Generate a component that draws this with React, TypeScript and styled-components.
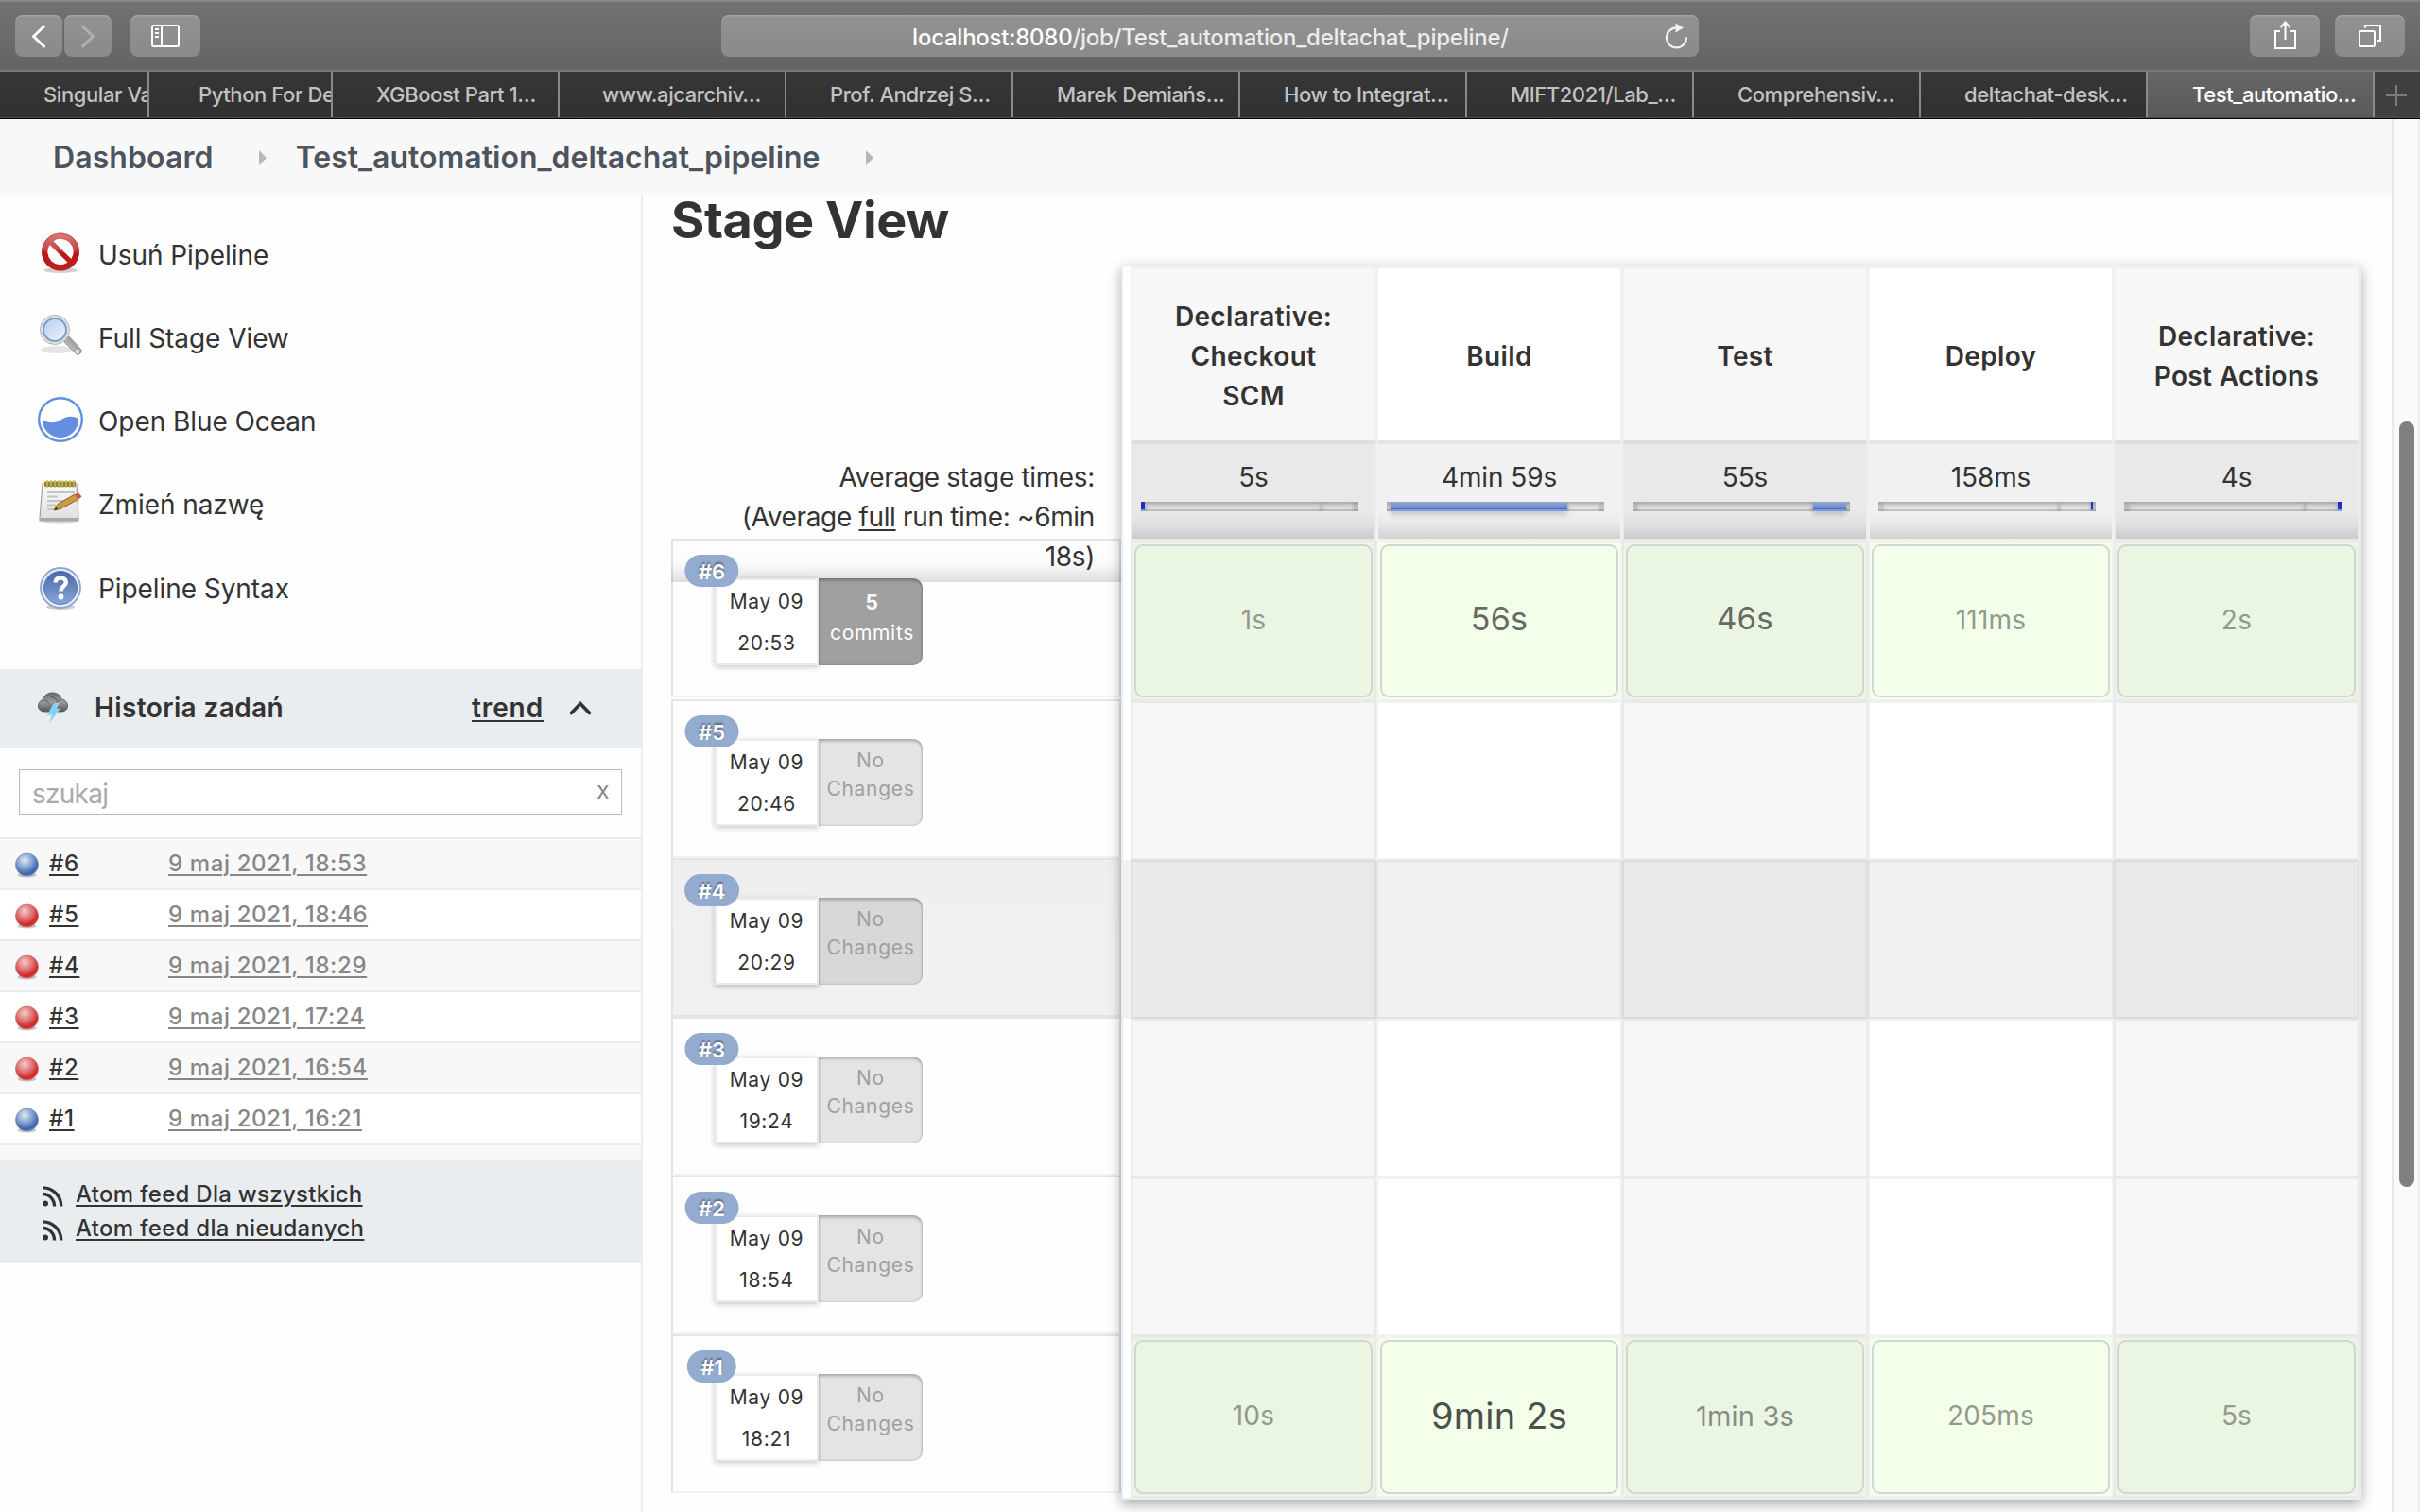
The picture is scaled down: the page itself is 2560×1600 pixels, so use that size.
import React from "react";
import styled, { createGlobalStyle, css } from "styled-components";

const GlobalStyle = createGlobalStyle`
  html, body { margin: 0; padding: 0; background: #fefefe; }
  body { width: 2560px; height: 1600px; overflow: hidden; }
  * { box-sizing: border-box; }
  a { color: inherit; }
  button { border: 0; padding: 0; font: inherit; }
  svg { display: block; flex: none; }
`;

const Window = styled.div`
  width: 2560px;
  height: 1600px;
  overflow: hidden;
  display: flex;
  flex-direction: column;
  background: #fefefe;
  color: #333;
  font-family: Inter, "Noto Sans", sans-serif;
  font-size: 28px;
`;

/* ---------- Browser chrome ---------- */

const Toolbar = styled.header`
  flex: none;
  height: 76px;
  display: grid;
  grid-template-columns: 747px 1034px 1fr;
  align-items: start;
  padding: 14px 16px 0;
  border-top: 2px solid #888;
  border-bottom: 2px solid #787878;
  background: linear-gradient(#727272, #646464);
`;

const ToolGroup = styled.div<{ $end?: boolean }>`
  display: flex;
  gap: ${(p) => (p.$end ? 16 : 2)}px;
  justify-content: ${(p) => (p.$end ? "flex-end" : "flex-start")};
`;

const ToolButton = styled.button<{ $wide?: boolean; $spaced?: boolean }>`
  width: ${(p) => (p.$wide ? 74 : 50)}px;
  height: 44px;
  margin-left: ${(p) => (p.$spaced ? 18 : 0)}px;
  border-radius: 8px;
  background: linear-gradient(#929292, #8a8a8a);
  box-shadow: inset 0 2px 0 -0.5px #a4a4a4;
`;

const AddressBar = styled.div`
  position: relative;
  height: 44px;
  padding: 2px 0 0 1px;
  border-radius: 8px;
  background: linear-gradient(#929292, #8a8a8a);
  box-shadow: inset 0 2px 0 -0.5px #a4a4a4;
  color: #ececec;
  font-size: 24px;
  font-weight: 500;
  line-height: 44px;
  letter-spacing: -0.25px;
  text-align: center;
  b { color: #fff; font-weight: 500; }
`;

const ReloadIcon = styled.svg`
  position: absolute;
  right: 8px;
  top: 5px;
`;

const TabStrip = styled.nav`
  flex: none;
  display: flex;
  height: 50px;
  border-bottom: 1px solid #000;
  box-shadow: inset 0 -1px 0 #4c4c4c;
  background: linear-gradient(#363636, #313131);
`;

const Tab = styled.div<{ $w: number; $pad: number; $active?: boolean }>`
  flex: none;
  width: ${(p) => p.$w}px;
  height: 48px;
  padding-left: ${(p) => p.$pad}px;
  border-right: 2px solid #8a8a8a;
  overflow: hidden;
  white-space: nowrap;
  font-size: 22px;
  font-weight: 500;
  line-height: 49px;
  letter-spacing: -0.42px;
  color: ${(p) => (p.$active ? "#fff" : "#c2c2c2")};
  background: ${(p) => (p.$active ? "linear-gradient(#666, #5a5a5a)" : "none")};
`;

const NewTab = styled.div`
  flex: 1;
  height: 48px;
  display: flex;
  align-items: center;
  padding: 2px 0 0 12px;
  background: #404040;
`;

/* ---------- Page frame ---------- */

const Viewport = styled.div`
  flex: 1;
  min-height: 0;
  display: flex;
`;

const Page = styled.div`
  width: 2530px;
  display: flex;
  flex-direction: column;
  overflow: hidden;
`;

const ScrollTrack = styled.div`
  width: 30px;
  padding: 320px 0 0 6px;
  border-left: 2px solid #e8e8e8;
  border-right: 2px solid #ededed;
  background: #fafafa;
`;

const ScrollThumb = styled.div`
  width: 16px;
  height: 810px;
  border-radius: 8px;
  background: #808080;
`;

const Breadcrumbs = styled.div`
  flex: none;
  height: 80px;
  display: flex;
  align-items: center;
  padding: 1px 0 0 56px;
  background: #f8f8f8;
  color: #4d545d;
  font-size: 32px;
  font-weight: 600;
  span:first-child { letter-spacing: 0.1px; }
`;

const Crumb = styled.svg<{ $after: number }>`
  margin: 0 ${(p) => p.$after}px 0 48px;
`;

const Columns = styled.div`
  flex: 1;
  min-height: 0;
  display: flex;
`;

/* ---------- Side panel ---------- */

const Side = styled.aside`
  flex: none;
  width: 680px;
  padding-top: 19px;
  border-right: 2px solid #e9edf0;
`;

const Tasks = styled.div`
  height: 483px;
`;

const Task = styled.a`
  height: 88px;
  display: flex;
  align-items: center;
  gap: 16px;
  padding: 2px 0 0 40px;
  letter-spacing: -0.07px;
  &:last-child { height: 90px; }
  svg { margin-top: -4px; }
`;

const HistoryHeader = styled.div`
  height: 84px;
  display: flex;
  align-items: center;
  padding: 0 52px 3px 40px;
  background: #e9edf0;
  font-weight: 600;
  letter-spacing: 0.38px;
  span { margin-left: 28px; }
  a {
    margin: 0 27px 0 auto;
    letter-spacing: 0.9px;
    text-decoration-thickness: 2px;
    text-underline-offset: 3px;
  }
`;

const SearchArea = styled.div`
  height: 94px;
  padding: 22px 20px 0;
`;

const SearchBox = styled.div`
  height: 48px;
  display: flex;
  justify-content: space-between;
  padding: 0 13px 0 13px;
  border: 1px solid #bbb;
  background: #fff;
  color: #a9a9a9;
  line-height: 51px;
  letter-spacing: -0.75px;
  i {
    color: #888;
    font-style: normal;
    font-size: 25px;
    line-height: 42px;
  }
`;

const BuildList = styled.div`
  border-top: 2px solid #e9edf0;
`;

const BuildRow = styled.div`
  height: 54px;
  display: grid;
  grid-template-columns: 36px 126px 1fr;
  align-items: center;
  padding-left: 16px;
  border-bottom: 2px solid #e9edf0;
  background: #fff;
  font-size: 24px;
  font-weight: 500;
  &:nth-child(odd) { background: #f8f8f8; }
  svg { margin-top: 2px; }
  a {
    margin-top: -1px;
    text-decoration: underline;
    text-decoration-thickness: 2px;
    text-underline-offset: 3px;
    letter-spacing: 0.62px;
  }
  a:last-child { color: #868686; }
`;

const ListEnd = styled.div`
  height: 16px;
  background: #f8f8f8;
`;

const Feeds = styled.div`
  height: 108px;
  padding: 17px 0 0 44px;
  background: #e9edf0;
`;

const Feed = styled.div`
  height: 36px;
  display: flex;
  align-items: center;
  gap: 12px;
  font-size: 24px;
  font-weight: 500;
  letter-spacing: 0.28px;
  svg { margin-top: 6px; }
  a {
    text-decoration: underline;
    text-decoration-thickness: 2px;
    text-underline-offset: 3px;
  }
`;

/* ---------- Stage view ---------- */

const Main = styled.main`
  flex: 1;
  padding-left: 30px;
`;

const Title = styled.h2`
  height: 74px;
  margin: 0;
  font-size: 54px;
  font-weight: 700;
  line-height: 53px;
  letter-spacing: -0.45px;
`;

const StageView = styled.div`
  display: flex;
  align-items: flex-start;
`;

const Runs = styled.div`
  flex: none;
  width: 476px;
  padding-top: 190px;
`;

const AverageNote = styled.div`
  position: relative;
  z-index: 1;
  height: 146px;
  margin-bottom: -46px;
  padding: 14px 28px 0 0;
  line-height: 42px;
  letter-spacing: -0.34px;
  text-align: right;
  background: linear-gradient(transparent 112px, rgba(0, 0, 0, 0.02) 128px, rgba(0, 0, 0, 0.13) 146px);
  u { text-decoration-thickness: 2px; text-underline-offset: 3px; }
`;

const Run = styled.div<{ $hot?: boolean }>`
  position: relative;
  height: 168px;
  padding: 40px 0 0 44px;
  border: 2px solid #e4e4e4;
  border-bottom-color: ${(p) => (p.$hot ? "#e4e4e4" : "#f0f0f0")};
  background: ${(p) => (p.$hot ? "linear-gradient(#eee, #f1f1f1 50%)" : "none")};
  &:nth-child(2) { margin-bottom: 2px; }
`;

const RunBadge = styled.span`
  position: absolute;
  z-index: 3;
  left: 41px;
  top: 15px;
  transform: translateX(-50%);
  height: 34px;
  padding: 1px 14.5px 0;
  border-radius: 17px;
  background: #93abce;
  color: #fff;
  font-size: 22px;
  font-weight: 600;
  line-height: 34px;
  text-shadow: 0 -2px 2px rgba(0, 0, 0, 0.4);
`;

const RunInfo = styled.div`
  position: relative;
  z-index: 2;
  display: flex;
  width: 220px;
  height: 92px;
  font-size: 21px;
  letter-spacing: 0.7px;
  text-align: center;
`;

const Stamp = styled.div`
  width: 110px;
  padding-top: 1px;
  border: 2px solid #e8ecf1;
  background: #fff;
  box-shadow: 0 2px 6px rgba(0, 0, 0, 0.22);
  line-height: 44px;
  white-space: pre-line;
`;

const Changes = styled.div<{ $commits?: boolean; $hot?: boolean }>`
  width: 110px;
  border-radius: 0 10px 10px 0;
  ${(p) =>
    p.$commits
      ? css`
          padding: 10px 0 0 3px;
          background: #a0a0a0;
          color: #fff;
          line-height: 32px;
        `
      : css`
          padding-top: 8px;
          background: ${p.$hot ? "#d8d8d8" : "#e4e4e4"};
          color: #a0a0a0;
          line-height: 30px;
        `}
  box-shadow: inset 0 3px 3px rgba(0, 0, 0, 0.18), inset 0 0 2px 1px rgba(0, 0, 0, 0.12);
  b { display: block; font-weight: 700; }
`;

const Panel = styled.div`
  position: relative;
  width: 1312px;
  height: 1307px;
  border: 2px solid #e9edf1;
  background: #fff;
  box-shadow: 0 5px 13px rgba(0, 0, 0, 0.32);
`;

const GridRow = styled.div<{ $h: number; $hot?: boolean }>`
  display: flex;
  height: ${(p) => p.$h}px;
  padding-left: 8px;
  background: ${(p) => (p.$hot ? "#f1f1f1" : "none")};
`;

const cellBase = css`
  width: 260px;
  border: 2px solid #f1f1f1;
`;

const HeadCell = styled.div`
  ${cellBase}
  display: flex;
  align-items: center;
  justify-content: center;
  padding-top: 4px;
  background: #fff;
  border-bottom-color: #e4e4e4;
  font-weight: 600;
  line-height: 42px;
  letter-spacing: 0.35px;
  text-align: center;
  white-space: pre-line;
  &:nth-child(odd) {
    background: #f7f7f7;
    border-bottom-color: #dedede;
  }
`;

const TimeCell = styled.div`
  ${cellBase}
  padding: 14px 0 0 9px;
  border-top-color: #e4e4e4;
  background: linear-gradient(transparent 70px, rgba(0, 0, 0, 0.035) 84px, rgba(0, 0, 0, 0.13) 100px) #f1f1f1;
  line-height: 42px;
  letter-spacing: -0.1px;
  &:nth-child(odd) {
    border-color: #dedede #ececec #e9e9e9;
    background-color: #e9e9e9;
  }
  p { margin: 0 9px 5px 0; text-align: center; }
`;

const Meter = styled.div`
  display: flex;
  width: 230px;
  height: 10px;
`;

const Segment = styled.i<{ $kind: "track" | "bar" | "dot" }>`
  ${(p) =>
    p.$kind === "track" &&
    css`
      background: linear-gradient(transparent 8px, rgba(0, 0, 0, 0.12) 8px) rgba(0, 0, 0, 0.06);
      box-shadow: inset 0 2px 4px rgba(0, 0, 0, 0.3);
    `}
  ${(p) =>
    p.$kind === "bar" &&
    css`
      background: linear-gradient(#90abd0, #6c86cb 7px, #566cc8 7px, #566cc8 8px, #7b9be0 8px);
      box-shadow: 0 4px 5px rgba(0, 0, 0, 0.16);
    `}
  ${(p) => p.$kind === "dot" && css`background: linear-gradient(#1d31c8 8px, #7b9be0 8px);`}
`;

const Cell = styled.div<{ $hot?: boolean; $done?: boolean }>`
  ${cellBase}
  padding: 2px;
  background: ${(p) => (p.$hot ? "#f1f1f1" : p.$done ? "#f3ffe9" : "#fff")};
  border-color: ${(p) => (p.$hot ? "#e4e4e4" : "#f1f1f1")};
  &:nth-child(odd) {
    background: ${(p) => (p.$hot ? "#e9e9e9" : p.$done ? "#ebf6e2" : "#f7f7f7")};
    border-color: ${(p) => (p.$hot ? "#dcdcdc" : "#e9e9e9")};
  }
`;

const Duration = styled.div<{ $size: number; $tone: string }>`
  height: 100%;
  display: flex;
  align-items: center;
  justify-content: center;
  padding-bottom: ${(p) => (p.$size > 30 && p.$size < 36 ? 6 : 3)}px;
  border: 2px solid #d1d5d4;
  border-radius: 9px;
  font-size: ${(p) => p.$size}px;
  letter-spacing: 0.2px;
  color: ${(p) => p.$tone};
`;

/* ---------- Icons ---------- */

const StopIcon = () => (
  <svg width="48" height="48" viewBox="0 0 48 48">
    <defs>
      <linearGradient id="stop" x1="0" y1="0" x2="0" y2="1">
        <stop offset="0" stopColor="#d98080" />
        <stop offset="0.45" stopColor="#c84040" />
        <stop offset="0.55" stopColor="#b81616" />
        <stop offset="1" stopColor="#c42020" />
      </linearGradient>
    </defs>
    <ellipse cx="24" cy="42" rx="18" ry="3" fill="#000" opacity="0.18" />
    <path
      fill="url(#stop)"
      fillRule="evenodd"
      d="M24 2.5a20 20 0 1 0 0 40a20 20 0 1 0 0-40zM16.400 11.200a13.600 13.600 0 0 1 18.900 18.900zM12.700 14.900a13.600 13.600 0 0 0 18.900 18.900z"
    />
    <circle cx="24" cy="22.5" r="19.5" fill="none" stroke="#a83030" strokeOpacity="0.5" strokeWidth="1" />
  </svg>
);

const LensIcon = () => (
  <svg width="48" height="48" viewBox="0 0 48 48">
    <defs>
      <linearGradient id="lens" x1="0" y1="0" x2="1" y2="1">
        <stop offset="0" stopColor="#b9cdf0" />
        <stop offset="1" stopColor="#edf3fc" />
      </linearGradient>
      <linearGradient id="handle" x1="0" y1="1" x2="1" y2="0">
        <stop offset="0" stopColor="#d8d8d8" />
        <stop offset="1" stopColor="#7c7c7c" />
      </linearGradient>
    </defs>
    <ellipse cx="20" cy="38" rx="17" ry="4" fill="#000" opacity="0.1" />
    <path d="M29 27l4-3 13 14c1 3-2 6-5 5L28 30z" fill="url(#handle)" stroke="#8a8a8a" strokeWidth="0.8" />
    <circle cx="42" cy="40" r="2.2" fill="#e6e6e6" />
    <circle cx="18" cy="17" r="15.5" fill="#e2e2e2" stroke="#b4b4b4" strokeWidth="1" />
    <circle cx="18" cy="17" r="12" fill="url(#lens)" stroke="#7d9ccc" strokeWidth="2" />
  </svg>
);

const OceanIcon = () => (
  <svg width="48" height="48" viewBox="0 0 48 48">
    <circle cx="24" cy="24" r="22.8" fill="#fff" stroke="#648fe0" strokeWidth="2.4" />
    <path
      fill="#648fe0"
      d="M5 23.5c3.5 3.2 7.500 4.200 12.500 3.600c7-1 9.500-6.300 17-6.400c3 0 5.500.7 8.500 2.300c.6 11-8 20-19 20c-11 0-19.500-9-19-19.500z"
    />
  </svg>
);

const NotepadIcon = () => (
  <svg width="48" height="48" viewBox="0 0 48 48">
    <defs>
      <linearGradient id="paper" x1="0" y1="0" x2="0" y2="1">
        <stop offset="0" stopColor="#fbfbfb" />
        <stop offset="1" stopColor="#dedede" />
      </linearGradient>
    </defs>
    <ellipse cx="23" cy="43.500" rx="20" ry="2" fill="#000" opacity="0.15" />
    <path d="M5 4h36l2 36v3H2v-3z" fill="url(#paper)" stroke="#a2a2a2" strokeWidth="1.2" />
    <path d="M2.500 40h40v3h-40z" fill="#a9a9a9" />
    <path d="M7 1.500h33v5.500H7z" fill="#8f8630" />
    <path d="M10 0v8M14 0v8M18 0v8M22 0v8M26 0v8M30 0v8M34 0v8M38 0v8" stroke="#c9bf5a" strokeWidth="1.400" />
    <path d="M10 13h29M10 17.500h11M10 22h23M10 26.500h9M10 31h7" stroke="#c4c4c4" strokeWidth="2" />
    <path d="M17 32l4-6.500L39 15l4.500 5L24 30.500z" fill="#cf9a45" stroke="#8d6520" strokeWidth="1" />
    <path d="M39 15l4-1.500 3.500 4-3 2.500z" fill="#d4504a" />
    <path d="M17 32l2-3.500 2.500 2.500z" fill="#4a3a1a" />
  </svg>
);

const HelpIcon = () => (
  <svg width="48" height="48" viewBox="0 0 48 48">
    <defs>
      <linearGradient id="help" x1="0" y1="0" x2="0" y2="1">
        <stop offset="0" stopColor="#4a69a6" />
        <stop offset="1" stopColor="#86a5d8" />
      </linearGradient>
    </defs>
    <ellipse cx="24" cy="45" rx="15" ry="3" fill="#000" opacity="0.2" />
    <circle cx="24" cy="25" r="21" fill="#e9eef7" stroke="#90a6cf" strokeWidth="1.800" />
    <circle cx="24" cy="25" r="17.500" fill="url(#help)" stroke="#5a78b3" strokeWidth="1" />
    <path
      d="M18.500 19.500c.4-3.800 2.700-5 5.700-5c3.200 0 5.600 1.800 5.600 4.700c0 4.300-5.300 4.300-5.300 9.300"
      fill="none"
      stroke="#fff"
      strokeWidth="4.400"
    />
    <circle cx="24.500" cy="34.500" r="2.900" fill="#fff" />
  </svg>
);

const StormIcon = () => (
  <svg width="32" height="34" viewBox="0 0 32 34">
    <defs>
      <linearGradient id="cloud" x1="0" y1="0" x2="0" y2="1">
        <stop offset="0" stopColor="#6a6a6a" />
        <stop offset="0.5" stopColor="#9a9a9a" />
        <stop offset="1" stopColor="#555" />
      </linearGradient>
    </defs>
    <path
      d="M8 21c-4 0-7.500-2-7.500-6c0-3.500 2.500-6 5-6.500C6.500 4 10.500 1 15.500 1c5.500 0 8.500 3 9.500 7c4 .5 6.500 3.500 6.500 7c0 4-3.500 6-7 6z"
      fill="url(#cloud)"
      stroke="#5c5c5c"
      strokeWidth="1"
    />
    <path d="M7 9.500c2 0 4 1 4.500 3M14 5.500c3 0 5 1.500 6 4M24 9c-2 0-3.500 1-4 3" fill="none" stroke="#555" strokeWidth="1" />
    <path d="M17 13l5-1-3 6.500 4-.5L12.500 33l2.500-9-5 1z" fill="#7fd0f8" stroke="#a9e0fb" strokeWidth="0.8" />
  </svg>
);

const Ball = ({ color }: { color: "blue" | "red" }) => (
  <svg width="26" height="28" viewBox="0 0 26 28">
    <defs>
      <radialGradient id={"ball-" + color} cx="0.4" cy="0.3" r="0.72">
        <stop offset="0" stopColor={color === "blue" ? "#e3ebe6" : "#f6cccc"} />
        <stop offset="0.45" stopColor={color === "blue" ? "#87a5d2" : "#e07878"} />
        <stop offset="0.85" stopColor={color === "blue" ? "#3f63ab" : "#cc2626"} />
        <stop offset="1" stopColor={color === "blue" ? "#5c7fc4" : "#e04848"} />
      </radialGradient>
    </defs>
    <ellipse cx="12.500" cy="25" rx="10" ry="2.500" fill="#000" opacity="0.22" />
    <circle cx="12.500" cy="14" r="12" fill={`url(#ball-${color})`} stroke={color === "blue" ? "#7590be" : "#d06a6a"} strokeWidth="0.8" />
  </svg>
);

const RssIcon = () => (
  <svg width="24" height="24" viewBox="0 0 24 24" fill="none" stroke="#333" strokeWidth="3.300">
    <circle cx="4" cy="19.500" r="3" fill="#333" stroke="none" />
    <path d="M1 9.500A12.500 12.500 0 0 1 13.500 22.500M1 2.800A19.500 19.500 0 0 1 20.700 22.500" />
  </svg>
);

/* ---------- Data ---------- */

const tabs: [string, number, number][] = [
  ["Singular Va", 158, 46],
  ["Python For De", 194, 52],
  ["XGBoost Part 1…", 240, 46],
  ["www.ajcarchiv…", 240, 45],
  ["Prof. Andrzej S…", 240, 46],
  ["Marek Demiańs…", 240, 46],
  ["How to Integrat…", 240, 46],
  ["MIFT2021/Lab_…", 240, 46],
  ["Comprehensiv…", 240, 46],
  ["deltachat-desk…", 240, 46],
  ["Test_automatio…", 240, 47],
];

const tasks: [string, React.FC][] = [
  ["Usuń Pipeline", StopIcon],
  ["Full Stage View", LensIcon],
  ["Open Blue Ocean", OceanIcon],
  ["Zmień nazwę", NotepadIcon],
  ["Pipeline Syntax", HelpIcon],
];

const builds: [number, "blue" | "red", string][] = [
  [6, "blue", "18:53"],
  [5, "red", "18:46"],
  [4, "red", "18:29"],
  [3, "red", "17:24"],
  [2, "red", "16:54"],
  [1, "blue", "16:21"],
];

type Time = [string, number];

const runs: { id: number; time: string; h: number; hot?: boolean; commits?: number; times?: Time[] }[] = [
  { id: 6, time: "20:53", h: 170, commits: 5, times: [["1s", 28], ["56s", 34], ["46s", 33], ["111ms", 28], ["2s", 28]] },
  { id: 5, time: "20:46", h: 168 },
  { id: 4, time: "20:29", h: 168, hot: true },
  { id: 3, time: "19:24", h: 168 },
  { id: 2, time: "18:54", h: 168 },
  { id: 1, time: "18:21", h: 171, times: [["10s", 28], ["9min 2s", 38], ["1min 3s", 29], ["205ms", 28], ["5s", 28]] },
];

const toneFor = (size: number) =>
  size > 35 ? "#4b504a" : size > 30 ? "#656a64" : size > 28 ? "#868c82" : "#92998e";

type Seg = ["track" | "bar" | "dot", number];

const stages: { name: string; avg: string; meter: Seg[] }[] = [
  { name: "Declarative:\nCheckout\nSCM", avg: "5s", meter: [["dot", 4], ["track", 187], ["track", 35], ["track", 4]] },
  { name: "Build", avg: "4min 59s", meter: [["track", 4], ["bar", 187], ["track", 35], ["track", 4]] },
  { name: "Test", avg: "55s", meter: [["track", 4], ["track", 187], ["bar", 35], ["track", 4]] },
  { name: "Deploy", avg: "158ms", meter: [["track", 4], ["track", 187], ["track", 34], ["dot", 2], ["track", 3]] },
  { name: "Declarative:\nPost Actions", avg: "4s", meter: [["track", 4], ["track", 187], ["track", 35], ["dot", 4]] },
];

export default function App() {
  return (
    <Window>
      <GlobalStyle />
      <Toolbar>
        <ToolGroup>
          <ToolButton>
            <svg width="50" height="44" fill="none" stroke="#fff" strokeWidth="3" strokeLinecap="round" strokeLinejoin="round">
              <path d="M30.500 12L19.500 22.500L30.500 33" />
            </svg>
          </ToolButton>
          <ToolButton>
            <svg width="50" height="44" fill="none" stroke="#b0b0b0" strokeWidth="3" strokeLinecap="round" strokeLinejoin="round">
              <path d="M19.500 12L30.500 22.500L19.500 33" />
            </svg>
          </ToolButton>
          <ToolButton $wide $spaced>
            <svg width="74" height="44" fill="none" stroke="#fff" strokeWidth="2">
              <rect x="23" y="11" width="28" height="22" rx="1.500" />
              <path d="M33 11V33M26 15h4M26 19h4M26 23h4" />
            </svg>
          </ToolButton>
        </ToolGroup>
        <AddressBar>
          <b>localhost:8080</b>/job/Test_automation_deltachat_pipeline/
          <ReloadIcon width="32" height="34" fill="none" stroke="#f2f2f2" strokeWidth="2.200">
            <path d="M16.500 8.400A10.500 10.500 0 1 0 27 18.500" />
            <path d="M15.500 3.500L24 8.400L15.500 13.500z" fill="#f2f2f2" stroke="none" />
          </ReloadIcon>
        </AddressBar>
        <ToolGroup $end>
          <ToolButton $wide>
            <svg width="74" height="44" fill="none" stroke="#fff" strokeWidth="2">
              <path d="M32 17h-5v18h21V17h-5M37.500 26V8M32.500 13l5-5.500l5 5.500" />
            </svg>
          </ToolButton>
          <ToolButton $wide>
            <svg width="74" height="44" fill="none" stroke="#fff" strokeWidth="2">
              <rect x="26" y="17" width="16" height="16" rx="1.500" />
              <path d="M32 13.500V11h16v16h-3" />
            </svg>
          </ToolButton>
        </ToolGroup>
      </Toolbar>
      <TabStrip>
        {tabs.map(([label, w, pad], i) => (
          <Tab key={label} $w={w} $pad={pad} $active={i === tabs.length - 1}>
            {label}
          </Tab>
        ))}
        <NewTab>
          <svg width="22" height="22" stroke="#7d7d7d" strokeWidth="2">
            <path d="M11 0v22M0 11h22" />
          </svg>
        </NewTab>
      </TabStrip>
      <Viewport>
        <Page>
          <Breadcrumbs>
            <span>Dashboard</span>
            <Crumb $after={31} width="8" height="16">
              <path d="M0 0L8 8L0 16z" fill="#b8b8b8" />
            </Crumb>
            <span>Test_automation_deltachat_pipeline</span>
            <Crumb $after={0} width="8" height="16">
              <path d="M0 0L8 8L0 16z" fill="#b8b8b8" />
            </Crumb>
          </Breadcrumbs>
          <Columns>
            <Side>
              <Tasks>
                {tasks.map(([label, Icon]) => (
                  <Task key={label}>
                    <Icon />
                    {label}
                  </Task>
                ))}
              </Tasks>
              <HistoryHeader>
                <StormIcon />
                <span>Historia zadań</span>
                <a href="#trend">trend</a>
                <svg width="24" height="16" fill="none" stroke="#333" strokeWidth="3.600" strokeLinecap="round">
                  <path d="M2.500 13.500L12 3.500L21.500 13.500" />
                </svg>
              </HistoryHeader>
              <SearchArea>
                <SearchBox>
                  szukaj<i>x</i>
                </SearchBox>
              </SearchArea>
              <BuildList>
                {builds.map(([id, color, time]) => (
                  <BuildRow key={id}>
                    <Ball color={color} />
                    <a>#{id}</a>
                    <a>9 maj 2021, {time}</a>
                  </BuildRow>
                ))}
              </BuildList>
              <ListEnd />
              <Feeds>
                <Feed>
                  <RssIcon />
                  <a>Atom feed Dla wszystkich</a>
                </Feed>
                <Feed>
                  <RssIcon />
                  <a>Atom feed dla nieudanych</a>
                </Feed>
              </Feeds>
            </Side>
            <Main>
              <Title>Stage View</Title>
              <StageView>
                <Runs>
                  <AverageNote>
                    Average stage times:
                    <br />
                    (Average <u>full</u> run time: ~6min
                    <br />
                    18s)
                  </AverageNote>
                  {runs.map((r) => (
                    <Run key={r.id} $hot={r.hot}>
                      <RunBadge>#{r.id}</RunBadge>
                      <RunInfo>
                        <Stamp>{"May 09\n" + r.time}</Stamp>
                        {r.commits ? (
                          <Changes $commits>
                            <b>{r.commits}</b>commits
                          </Changes>
                        ) : (
                          <Changes $hot={r.hot}>
                            No
                            <br />
                            Changes
                          </Changes>
                        )}
                      </RunInfo>
                    </Run>
                  ))}
                </Runs>
                <Panel>
                  <GridRow $h={186}>
                    {stages.map((s) => (
                      <HeadCell key={s.name}>{s.name}</HeadCell>
                    ))}
                  </GridRow>
                  <GridRow $h={104}>
                    {stages.map((s) => (
                      <TimeCell key={s.name}>
                        <p>{s.avg}</p>
                        <Meter>
                          {s.meter.map(([kind, width], i) => (
                            <Segment key={i} $kind={kind} style={{ width }} />
                          ))}
                        </Meter>
                      </TimeCell>
                    ))}
                  </GridRow>
                  {runs.map((r) => (
                    <GridRow key={r.id} $h={r.h} $hot={r.hot}>
                      {stages.map((s, i) => (
                        <Cell key={s.name} $hot={r.hot} $done={!!r.times}>
                          {r.times && (
                            <Duration $size={r.times[i][1]} $tone={toneFor(r.times[i][1])}>
                              {r.times[i][0]}
                            </Duration>
                          )}
                        </Cell>
                      ))}
                    </GridRow>
                  ))}
                </Panel>
              </StageView>
            </Main>
          </Columns>
        </Page>
        <ScrollTrack>
          <ScrollThumb />
        </ScrollTrack>
      </Viewport>
    </Window>
  );
}
